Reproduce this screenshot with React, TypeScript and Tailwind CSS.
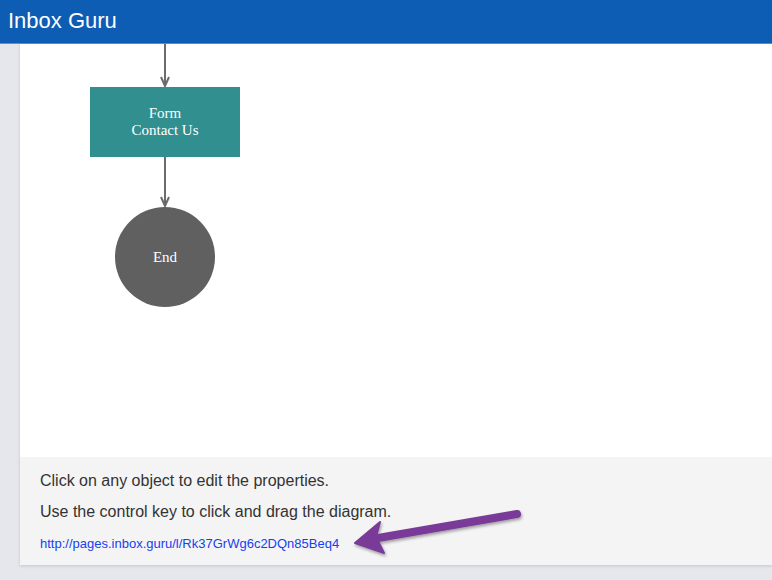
import React from 'react';

const sans = { fontFamily: '"Liberation Sans", Arial, Helvetica, sans-serif' };
const serif = { fontFamily: '"Liberation Serif", "Times New Roman", serif' };

const Arrow = () => (
  <svg className="absolute left-0 top-0 pointer-events-none" width="772" height="580" viewBox="0 0 772 580">
    <defs>
      <filter id="sh" x="-20%" y="-50%" width="140%" height="200%">
        <feDropShadow dx="1" dy="2" stdDeviation="1.5" floodColor="#000" floodOpacity="0.35" />
      </filter>
    </defs>
    <g filter="url(#sh)">
      <line x1="517" y1="514" x2="378" y2="538" stroke="#7a3b98" strokeWidth="8" strokeLinecap="round" />
      <path d="M355 543 L380 522 L376 537 L384 553 Z" fill="#7a3b98" stroke="#7a3b98" strokeWidth="2" strokeLinejoin="round" />
    </g>
  </svg>
);

const Diagram = () => (
  <div className="relative h-[413px] bg-white">
    <svg className="absolute left-0 top-0" width="300" height="413" viewBox="0 0 300 413">
      <g stroke="#6b6b6b" strokeWidth="2" fill="none">
        <line x1="145" y1="0" x2="145" y2="40" />
        <polyline points="141,33 145,42 149,33" />
        <line x1="145" y1="113" x2="145" y2="160" />
        <polyline points="141,153 145,162 149,153" />
      </g>
    </svg>
    <div
      className="absolute left-[70px] top-[43px] w-[150px] h-[70px] bg-[#318f8f] flex flex-col items-center justify-center text-white text-[15px] leading-[17px]"
      style={serif}
    >
      <span>Form</span>
      <span>Contact Us</span>
    </div>
    <div
      className="absolute left-[95px] top-[163px] w-[100px] h-[100px] rounded-full bg-[#606060] flex items-center justify-center text-white text-[15px]"
      style={serif}
    >
      End
    </div>
  </div>
);

export default function App() {
  return (
    <div className="relative w-[772px] h-[580px] overflow-hidden bg-[#e6e7ec]" style={sans}>
      <header className="h-[44px] bg-[#0c5db3] border-b border-[#5b8fd0] flex items-center pl-[8px]">
        <h1 className="text-white text-[22px] leading-none pb-[2px]">Inbox Guru</h1>
      </header>
      <div className="ml-[20px] shadow-[0_1px_3px_rgba(0,0,0,0.15)]">
        <Diagram />
        <div className="h-[108px] bg-[#f4f4f4] pl-[20px] pt-[13px] text-[#333]">
          <p className="text-[16px] leading-[22px]">Click on any object to edit the properties.</p>
          <p className="text-[16px] leading-[22px] mt-[9px]">Use the control key to click and drag the diagram.</p>
          <a className="block text-[13px] leading-[16px] mt-[13px] text-[#1740f0]" href="#">
            http://pages.inbox.guru/l/Rk37GrWg6c2DQn85Beq4
          </a>
        </div>
      </div>
      <Arrow />
    </div>
  );
}
